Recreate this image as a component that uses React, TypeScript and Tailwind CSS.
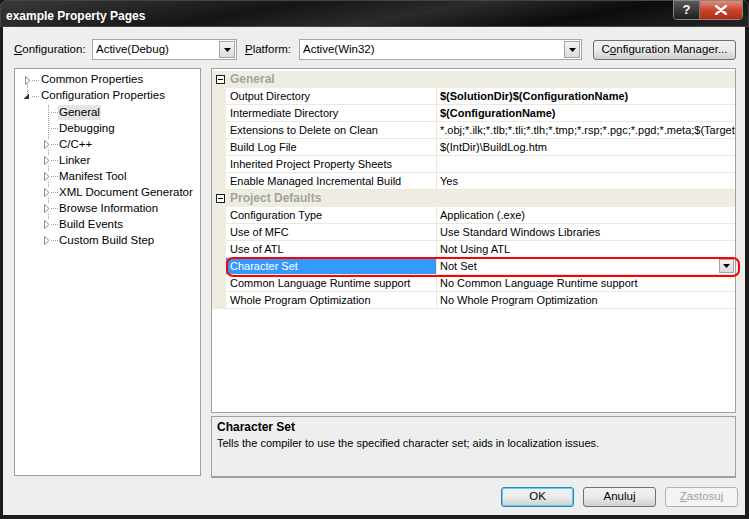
import React from "react";

type Row = {
  name: string;
  value: string;
  bold?: boolean;
  selected?: boolean;
};

const general: Row[] = [
  { name: "Output Directory", value: "$(SolutionDir)$(ConfigurationName)", bold: true },
  { name: "Intermediate Directory", value: "$(ConfigurationName)", bold: true },
  {
    name: "Extensions to Delete on Clean",
    value: "*.obj;*.ilk;*.tlb;*.tli;*.tlh;*.tmp;*.rsp;*.pgc;*.pgd;*.meta;$(TargetPath)",
  },
  { name: "Build Log File", value: "$(IntDir)\\BuildLog.htm" },
  { name: "Inherited Project Property Sheets", value: "" },
  { name: "Enable Managed Incremental Build", value: "Yes" },
];

const defaults: Row[] = [
  { name: "Configuration Type", value: "Application (.exe)" },
  { name: "Use of MFC", value: "Use Standard Windows Libraries" },
  { name: "Use of ATL", value: "Not Using ATL" },
  { name: "Character Set", value: "Not Set", selected: true },
  { name: "Common Language Runtime support", value: "No Common Language Runtime support" },
  { name: "Whole Program Optimization", value: "No Whole Program Optimization" },
];

const treeChildren = [
  { label: "General", leaf: true, selected: true },
  { label: "Debugging", leaf: true },
  { label: "C/C++" },
  { label: "Linker" },
  { label: "Manifest Tool" },
  { label: "XML Document Generator" },
  { label: "Browse Information" },
  { label: "Build Events" },
  { label: "Custom Build Step" },
];

const OpenTriangle = () => (
  <svg width="6" height="9" viewBox="0 0 6 9" className="shrink-0">
    <path d="M0.5 0.5 L5 4.5 L0.5 8.5 Z" fill="white" stroke="#8c8c8c" />
  </svg>
);

const FilledTriangle = () => (
  <svg width="7" height="7" viewBox="0 0 7 7" className="shrink-0">
    <path d="M6 0.5 L6 6 L0.5 6 Z" fill="#333" />
  </svg>
);

const DropArrow = () => (
  <svg width="7" height="4" viewBox="0 0 7 4">
    <path d="M0 0 H7 L3.5 4 Z" fill="black" />
  </svg>
);

const ComboButton = ({ className = "" }: { className?: string }) => (
  <div
    className={`flex items-center justify-center border border-[#a5a5a5] bg-gradient-to-b from-[#f4f4f4] to-[#dcdcdc] ${className}`}
  >
    <DropArrow />
  </div>
);

const Combo = ({ value, width }: { value: string; width: string }) => (
  <div className={`${width} h-[21px] border border-[#a6a6a6] bg-white flex items-center pl-[3px] pr-[1px]`}>
    <span className="flex-1">{value}</span>
    <ComboButton className="w-[16px] h-[17px]" />
  </div>
);

const WinButton = ({
  children,
  width,
  def,
  disabled,
}: {
  children: React.ReactNode;
  width: string;
  def?: boolean;
  disabled?: boolean;
}) => (
  <div
    className={`${width} h-[20px] rounded-[3px] border flex items-center justify-center ${
      def
        ? "border-[#3c7fb1] bg-gradient-to-b from-[#f2f2f2] via-[#ebebeb] to-[#cfcfcf] shadow-[inset_0_0_0_1px_#48d4fd]"
        : disabled
          ? "border-[#adb2b5] bg-[#f4f4f4] text-[#a0a0a0]"
          : "border-[#707070] bg-gradient-to-b from-[#f2f2f2] via-[#ebebeb] to-[#cfcfcf]"
    }`}
  >
    {children}
  </div>
);

const MinusBox = () => (
  <div className="w-[9px] h-[9px] border border-[#1a1a1a] bg-white flex items-center justify-center">
    <div className="w-[5px] h-[1px] bg-black" />
  </div>
);

const Category = ({ title }: { title: string }) => (
  <div className="h-[17px] flex items-center bg-[#efede2] border-b border-[#efede2]">
    <div className="w-[14px] flex justify-center pl-[2px]">
      <MinusBox />
    </div>
    <span className="pl-[4px] font-bold text-[12px] text-[#a3a3a3]">{title}</span>
  </div>
);

const PropRow = ({ row }: { row: Row }) => (
  <div className="h-[17px] flex">
    <div className="w-[14px] bg-[#efede2]" />
    <div
      className={`w-[211px] border-r border-b border-[#ece9d8] pl-[4px] flex items-center whitespace-nowrap overflow-hidden ${
        row.selected ? "bg-[#3399ff] text-white" : "bg-white"
      }`}
    >
      {row.name}
    </div>
    <div
      className={`flex-1 min-w-0 border-b border-[#ece9d8] pl-[3px] flex items-center whitespace-nowrap overflow-hidden bg-white ${
        row.bold ? "font-bold" : ""
      }`}
    >
      <span className="flex-1 overflow-hidden">{row.value}</span>
      {row.selected && <ComboButton className="w-[15px] h-[14px] mr-[1px]" />}
    </div>
  </div>
);

export default function App() {
  return (
    <div className="w-[749px] h-[519px] flex flex-col bg-[#111] overflow-hidden text-[11px] text-black font-['Liberation_Sans',Arial,sans-serif]">
      {/* title bar */}
      <div className="h-[27px] flex items-start rounded-t-[6px] bg-[linear-gradient(170deg,#3a3a3a_0%,#151515_35%,#2b2b2b_55%,#0c0c0c_75%,#262626_100%)] border border-[#444]">
        <span className="pl-[5px] pt-[6px] text-white font-bold text-[12px] flex-1">example Property Pages</span>
        <div className="flex mr-[5px] mt-[-1px] rounded-b-[4px] border border-[#888] overflow-hidden">
          <div className="w-[26px] h-[18px] bg-gradient-to-b from-[#5a5a5a] to-[#1e1e1e] text-white font-bold text-[13px] flex items-center justify-center border-r border-[#777]">
            ?
          </div>
          <div className="w-[42px] h-[18px] bg-gradient-to-b from-[#e08b7a] via-[#c9452e] to-[#b32a12] text-white flex items-center justify-center">
            <svg width="12" height="10" viewBox="0 0 12 10">
              <path d="M1 1 L11 9 M11 1 L1 9" stroke="white" strokeWidth="2.4" strokeLinecap="round" />
            </svg>
          </div>
        </div>
      </div>

      {/* client area */}
      <div className="flex-1 flex flex-col bg-[#eeeeee] border-l-[3px] border-r-[4px] border-b-[4px] border-[#1c1c1c]">
        {/* top row */}
        <div className="flex items-center pt-[12px] pl-[11px] text-[11.5px]">
          <span className="w-[78px]">
            <u>C</u>onfiguration:
          </span>
          <Combo value="Active(Debug)" width="w-[145px]" />
          <span className="ml-[8px] w-[54px]">
            <u>P</u>latform:
          </span>
          <Combo value="Active(Win32)" width="w-[283px]" />
          <div className="ml-[11px] mt-[1px]">
            <WinButton width="w-[143px]">
              <span>
                C<u>o</u>nfiguration Manager...
              </span>
            </WinButton>
          </div>
        </div>

        {/* main panels */}
        <div className="flex mt-[8px] pl-[11px]">
          {/* tree */}
          <div className="w-[187px] h-[408px] border border-[#a0a0a0] bg-white relative pt-[3px]">
            <div className="absolute left-[12px] top-[11px] h-[14px] border-l border-dotted border-[#a0a0a0]" />
            <div className="absolute left-[33px] top-[36px] h-[120px] border-l border-dotted border-[#a0a0a0]" />
            <div className="h-[16px] flex items-center pl-[10px] relative">
              <OpenTriangle />
              <span className="w-[7px] border-t border-dotted border-[#a0a0a0] ml-[1px] mr-[2px]" />
              <span className="text-[11.5px]">Common Properties</span>
            </div>
            <div className="h-[16px] flex items-center pl-[8px] relative">
              <FilledTriangle />
              <span className="w-[7px] border-t border-dotted border-[#a0a0a0] ml-[2px] mr-[2px]" />
              <span className="text-[11.5px]">Configuration Properties</span>
            </div>
            {treeChildren.map((c) => (
              <div key={c.label} className="h-[16px] flex items-center pl-[29px] relative">
                {c.leaf ? (
                  <span className="w-[6px] bg-white" />
                ) : (
                  <span className="bg-white flex">
                    <OpenTriangle />
                  </span>
                )}
                <span className="w-[7px] border-t border-dotted border-[#a0a0a0] ml-[1px]" />
                <span className={`text-[11.5px] px-[1px] leading-[15px] ${c.selected ? "bg-[#e4e4e4]" : ""}`}>
                  {c.label}
                </span>
              </div>
            ))}
          </div>

          {/* right column */}
          <div className="ml-[10px] flex flex-col">
            <div className="w-[525px] h-[345px] border border-[#a0a0a0] bg-white relative pt-[2px]">
              <Category title="General" />
              {general.map((r) => (
                <PropRow key={r.name} row={r} />
              ))}
              <Category title="Project Defaults" />
              {defaults.map((r) => (
                <PropRow key={r.name} row={r} />
              ))}
              <div className="absolute left-[14px] top-[188px] w-[514px] h-[20px] border-2 border-[#f00] rounded-[7px] pointer-events-none" />
            </div>
            <div className="w-[525px] h-[62px] mt-[3px] border border-b-2 border-[#a0a0a0] px-[5px] pt-[3px]">
              <div className="font-bold text-[12px] leading-[15px]">Character Set</div>
              <div className="leading-[16px]">Tells the compiler to use the specified character set; aids in localization issues.</div>
            </div>
          </div>
        </div>

        {/* bottom buttons */}
        <div className="flex justify-end gap-[9px] pr-[7px] mt-[9px] text-[11.5px]">
          <WinButton width="w-[73px]" def>
            OK
          </WinButton>
          <WinButton width="w-[73px]">Anuluj</WinButton>
          <WinButton width="w-[73px]" disabled>
            <span>
              <u>Z</u>astosuj
            </span>
          </WinButton>
        </div>
      </div>
    </div>
  );
}
